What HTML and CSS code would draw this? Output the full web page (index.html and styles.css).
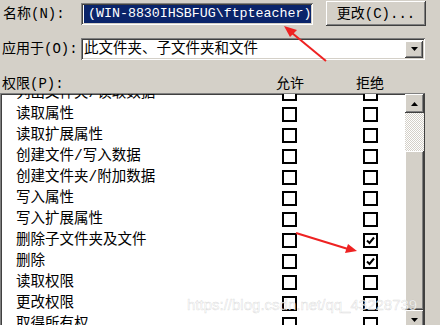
FILE: index.html
```html
<!DOCTYPE html>
<html>
<head>
<meta charset="utf-8">
<link rel="stylesheet" href="styles.css">
</head>
<body>
<div class="dlg">
  <div class="r1">
    <span class="lbl1">名称(N):</span>
    <div class="field"><span class="sel">(WIN-8830IHSBFUG\ftpteacher)</span></div>
    <div class="btn raised">更改(C)...</div>
  </div>
  <div class="r2">
    <span class="lbl2">应用于(O):</span>
    <div class="combo">
      <span class="ctext">此文件夹、子文件夹和文件</span>
      <span class="dd raised"><svg width="7" height="4" viewBox="0 0 7 4"><path d="M0 0H7L3.5 4Z" fill="#000"/></svg></span>
    </div>
  </div>
  <div class="hdr">
    <span class="hlbl">权限(P):</span>
    <span class="col">允许</span>
    <span class="col col2">拒绝</span>
  </div>
  <div class="list">
    <div class="items">
      <div class="rows">
        <div class="item"><span>列出文件夹/读取数据</span><i class="cb"></i><i></i><i class="cb"></i></div>
        <div class="item"><span>读取属性</span><i class="cb"></i><i></i><i class="cb"></i></div>
        <div class="item"><span>读取扩展属性</span><i class="cb"></i><i></i><i class="cb"></i></div>
        <div class="item"><span>创建文件/写入数据</span><i class="cb"></i><i></i><i class="cb"></i></div>
        <div class="item"><span>创建文件夹/附加数据</span><i class="cb"></i><i></i><i class="cb"></i></div>
        <div class="item"><span>写入属性</span><i class="cb"></i><i></i><i class="cb"></i></div>
        <div class="item"><span>写入扩展属性</span><i class="cb"></i><i></i><i class="cb"></i></div>
        <div class="item"><span>删除子文件夹及文件</span><i class="cb"></i><i></i><i class="cb"><svg width="11" height="11" viewBox="0 0 11 11"><path d="M2 5.5L4.5 8L9 2.5" fill="none" stroke="#000" stroke-width="2"/></svg></i></div>
        <div class="item"><span>删除</span><i class="cb"></i><i></i><i class="cb"><svg width="11" height="11" viewBox="0 0 11 11"><path d="M2 5.5L4.5 8L9 2.5" fill="none" stroke="#000" stroke-width="2"/></svg></i></div>
        <div class="item"><span>读取权限</span><i class="cb"></i><i></i><i class="cb"></i></div>
        <div class="item"><span>更改权限</span><i class="cb"></i><i></i><i class="cb"></i></div>
        <div class="item"><span>取得所有权</span><i class="cb"></i><i></i><i class="cb"></i></div>
      </div>
    </div>
    <div class="sbar">
      <div class="sb-btn raised"><svg width="7" height="4" viewBox="0 0 7 4"><path d="M0 4H7L3.5 0Z" fill="#000"/></svg></div>
      <div class="track"></div>
      <div class="thumb raised"></div>
      <div class="sb-btn raised"><svg width="7" height="4" viewBox="0 0 7 4"><path d="M0 0H7L3.5 4Z" fill="#000"/></svg></div>
    </div>
  </div>
  <svg class="arrows" width="440" height="325" viewBox="0 0 440 325">
    <line x1="326" y1="61" x2="292" y2="33" stroke="#ee2222" stroke-width="2"/>
    <path d="M284 26L297 30L290 37Z" fill="#ee2222"/>
    <line x1="296" y1="233" x2="348" y2="249" stroke="#ee2222" stroke-width="2"/>
    <path d="M357 251L345 253L348 244Z" fill="#ee2222"/>
  </svg>
  <div class="wm">https://blog.csdn.net/qq_43228739</div>
</div>
</body>
</html>
```

FILE: styles.css
```css
body {
  margin: 0;
}
.dlg {
  width: 440px;
  height: 325px;
  background: #d4d0c8;
  position: relative;
  overflow: hidden;
  font: 14px/1 "Liberation Mono", "Noto Sans CJK SC", monospace;
  color: #000;
}
.raised {
  background: #d4d0c8;
  box-shadow: inset -1px -1px #404040, inset 1px 1px #fff, inset -2px -2px #808080, inset 2px 2px #d4d0c8;
}
.r1 {
  display: flex;
  align-items: center;
  height: 25px;
  margin-top: 1px;
}
.lbl1 {
  width: 81px;
  box-sizing: border-box;
  padding-left: 3px;
}
.field {
  width: 232px;
  height: 22px;
  box-sizing: border-box;
  background: #fff;
  box-shadow: inset 1px 1px #808080, inset -1px -1px #fff, inset 2px 2px #404040, inset -2px -2px #d4d0c8;
  padding: 2px 2px 2px 3px;
  display: flex;
}
.sel {
  flex: 1;
  background: #0a246a;
  color: #fff;
  font-size: 13.3px;
  line-height: 18px;
  padding-left: 4px;
  white-space: nowrap;
  overflow: hidden;
}
.btn {
  margin-left: 13px;
  width: 100px;
  height: 25px;
  display: flex;
  align-items: center;
  justify-content: center;
}
.r2 {
  display: flex;
  align-items: center;
  height: 22px;
  margin-top: 12px;
}
.lbl2 {
  width: 81px;
  box-sizing: border-box;
  padding-left: 2px;
}
.combo {
  width: 344px;
  height: 22px;
  box-sizing: border-box;
  background: #fff;
  box-shadow: inset 1px 1px #808080, inset -1px -1px #fff, inset 2px 2px #404040, inset -2px -2px #d4d0c8;
  padding: 2px;
  display: flex;
  align-items: center;
}
.ctext {
  flex: 1;
  padding-left: 1px;
  font-size: 14.5px;
}
.dd {
  width: 18px;
  height: 17px;
  display: flex;
  align-items: center;
  justify-content: center;
}
.hdr {
  display: flex;
  align-items: center;
  height: 19px;
  margin-top: 14px;
}
.hlbl {
  width: 270px;
  box-sizing: border-box;
  padding-left: 2px;
}
.col {
  width: 40px;
  text-align: center;
}
.col2 {
  margin-left: 40px;
}
.list {
  display: flex;
  width: 425px;
  height: 240px;
  box-sizing: border-box;
  border-top: 1px solid #808080;
  border-left: 1px solid #808080;
  border-right: 1px solid #404040;
  background: #fff;
  box-shadow: inset 1px 1px #404040;
  overflow: hidden;
}
.items {
  flex: 1;
  padding-top: 1px;
  overflow: hidden;
}
.rows {
  margin-top: -12px;
}
.item {
  display: grid;
  grid-template-columns: 266px 15px 66px 15px;
  align-items: center;
  height: 21px;
  padding-left: 15px;
  white-space: nowrap;
  font-size: 14.5px;
}
.cb {
  width: 15px;
  height: 15px;
  box-sizing: border-box;
  border: 2px solid #000;
  background: #fff;
  display: flex;
  align-items: center;
  justify-content: center;
}
.sbar {
  width: 19px;
  display: flex;
  flex-direction: column;
  flex: none;
}
.sb-btn {
  height: 19px;
  flex: none;
  display: flex;
  align-items: center;
  justify-content: center;
}
.track {
  height: 38px;
  flex: none;
  background: repeating-conic-gradient(#fff 0 25%, #d4d0c8 0 50%) 0 0 / 2px 2px;
}
.thumb {
  height: 159px;
  flex: none;
}
.arrows {
  position: absolute;
  left: 0;
  top: 0;
  pointer-events: none;
}
.wm {
  position: absolute;
  left: 187px;
  top: 296px;
  font: 15px/18px "Liberation Sans", sans-serif;
  color: rgba(255, 255, 255, 0.8);
  -webkit-text-stroke: 0.5px rgba(150, 150, 150, 0.35);
  white-space: nowrap;
}
```
